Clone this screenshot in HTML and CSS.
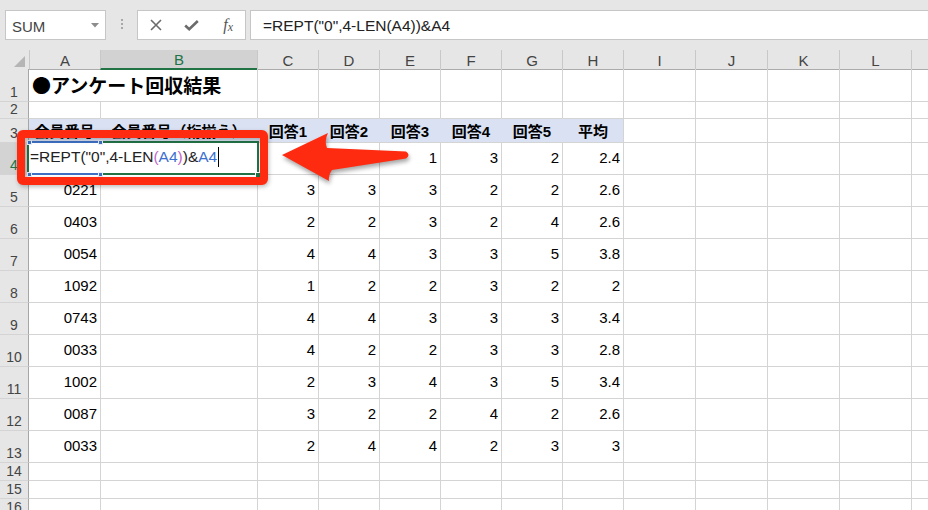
FILE: index.html
```html
<!DOCTYPE html>
<html lang="ja">
<head>
<meta charset="utf-8">
<title>アンケート回収結果</title>
<link rel="stylesheet" href="styles.css">
</head>
<body>
<div class="toolbar">
  <div class="namebox"><span>SUM</span><svg class="dd" width="8" height="5" viewBox="0 0 8 5"><polygon points="0,0 8,0 4,4.5" fill="#8c8c8c"/></svg></div>
  <div class="dots"><span class="dot"></span><span class="dot"></span><span class="dot"></span></div>
  <div class="btns">
    <span class="btn"><svg width="12" height="12" viewBox="0 0 12 12"><path d="M1 1 L11 11 M11 1 L1 11" stroke="#6b6b6b" stroke-width="1.6" fill="none"/></svg></span>
    <span class="btn"><svg width="15" height="11" viewBox="0 0 15 11"><path d="M1.2 5.5 L5.2 9.2 L13.8 1" stroke="#6b6b6b" stroke-width="2.6" fill="none"/></svg></span>
    <span class="btn fx"><i>f</i><i class="x">x</i></span>
  </div>
  <div class="fbar">=REPT("0",4-LEN(A4))&amp;A4</div>
</div>

<div class="sheet">
  <div class="row hdr">
    <div class="corner"><svg width="11" height="11" viewBox="0 0 11 11"><polygon points="11,0 11,11 0,11" fill="#b5b5b5"/></svg></div>
    <div class="ch">A</div><div class="ch selh">B</div><div class="ch">C</div><div class="ch">D</div><div class="ch">E</div><div class="ch">F</div><div class="ch">G</div><div class="ch">H</div><div class="ch">I</div><div class="ch">J</div><div class="ch">K</div><div class="ch">L</div><div class="ch"></div>
  </div>

  <div class="row r1">
    <div class="rh">1</div>
    <div class="c a span2 title">●アンケート回収結果</div>
    <div class="c"></div><div class="c"></div><div class="c"></div><div class="c"></div><div class="c"></div><div class="c"></div><div class="c"></div><div class="c"></div><div class="c"></div><div class="c"></div><div class="c"></div>
  </div>

  <div class="row r2">
    <div class="rh">2</div>
    <div class="c a"></div><div class="c"></div><div class="c"></div><div class="c"></div><div class="c"></div><div class="c"></div><div class="c"></div><div class="c"></div><div class="c"></div><div class="c"></div><div class="c"></div><div class="c"></div><div class="c"></div>
  </div>

  <div class="row r3">
    <div class="rh">3</div>
    <div class="c a th">会員番号</div><div class="c th">会員番号（桁揃え）</div><div class="c th">回答1</div><div class="c th">回答2</div><div class="c th">回答3</div><div class="c th">回答4</div><div class="c th">回答5</div><div class="c th">平均</div>
    <div class="c"></div><div class="c"></div><div class="c"></div><div class="c"></div><div class="c"></div>
  </div>

  <div class="row rd">
    <div class="rh selr">4</div>
    <div class="c a span2 edit">
      <span class="ftext">=REPT("0",4-LEN<span class="pk">(</span><span class="bl">A4</span><span class="pk">)</span>)&amp;<span class="bl">A4</span></span><span class="caret"></span>
      <span class="selbox"></span>
      <span class="handle"></span>
      <span class="refline top"></span><span class="refline bot"></span>
      <span class="sq s1"></span><span class="sq s2"></span><span class="sq s3"></span><span class="sq s4"></span>
    </div>
    <div class="c n">2</div><div class="c n">4</div><div class="c n">1</div><div class="c n">3</div><div class="c n">2</div><div class="c n">2.4</div>
    <div class="c"></div><div class="c"></div><div class="c"></div><div class="c"></div><div class="c"></div>
  </div>

  <div class="row rd">
    <div class="rh">5</div>
    <div class="c a n">0221</div><div class="c"></div><div class="c n">3</div><div class="c n">3</div><div class="c n">3</div><div class="c n">2</div><div class="c n">2</div><div class="c n">2.6</div>
    <div class="c"></div><div class="c"></div><div class="c"></div><div class="c"></div><div class="c"></div>
  </div>

  <div class="row rd">
    <div class="rh">6</div>
    <div class="c a n">0403</div><div class="c"></div><div class="c n">2</div><div class="c n">2</div><div class="c n">3</div><div class="c n">2</div><div class="c n">4</div><div class="c n">2.6</div>
    <div class="c"></div><div class="c"></div><div class="c"></div><div class="c"></div><div class="c"></div>
  </div>

  <div class="row rd">
    <div class="rh">7</div>
    <div class="c a n">0054</div><div class="c"></div><div class="c n">4</div><div class="c n">4</div><div class="c n">3</div><div class="c n">3</div><div class="c n">5</div><div class="c n">3.8</div>
    <div class="c"></div><div class="c"></div><div class="c"></div><div class="c"></div><div class="c"></div>
  </div>

  <div class="row rd">
    <div class="rh">8</div>
    <div class="c a n">1092</div><div class="c"></div><div class="c n">1</div><div class="c n">2</div><div class="c n">2</div><div class="c n">3</div><div class="c n">2</div><div class="c n">2</div>
    <div class="c"></div><div class="c"></div><div class="c"></div><div class="c"></div><div class="c"></div>
  </div>

  <div class="row rd">
    <div class="rh">9</div>
    <div class="c a n">0743</div><div class="c"></div><div class="c n">4</div><div class="c n">4</div><div class="c n">3</div><div class="c n">3</div><div class="c n">3</div><div class="c n">3.4</div>
    <div class="c"></div><div class="c"></div><div class="c"></div><div class="c"></div><div class="c"></div>
  </div>

  <div class="row rd">
    <div class="rh">10</div>
    <div class="c a n">0033</div><div class="c"></div><div class="c n">4</div><div class="c n">2</div><div class="c n">2</div><div class="c n">3</div><div class="c n">3</div><div class="c n">2.8</div>
    <div class="c"></div><div class="c"></div><div class="c"></div><div class="c"></div><div class="c"></div>
  </div>

  <div class="row rd">
    <div class="rh">11</div>
    <div class="c a n">1002</div><div class="c"></div><div class="c n">2</div><div class="c n">3</div><div class="c n">4</div><div class="c n">3</div><div class="c n">5</div><div class="c n">3.4</div>
    <div class="c"></div><div class="c"></div><div class="c"></div><div class="c"></div><div class="c"></div>
  </div>

  <div class="row rd">
    <div class="rh">12</div>
    <div class="c a n">0087</div><div class="c"></div><div class="c n">3</div><div class="c n">2</div><div class="c n">2</div><div class="c n">4</div><div class="c n">2</div><div class="c n">2.6</div>
    <div class="c"></div><div class="c"></div><div class="c"></div><div class="c"></div><div class="c"></div>
  </div>

  <div class="row rd">
    <div class="rh">13</div>
    <div class="c a n">0033</div><div class="c"></div><div class="c n">2</div><div class="c n">4</div><div class="c n">4</div><div class="c n">2</div><div class="c n">3</div><div class="c n">3</div>
    <div class="c"></div><div class="c"></div><div class="c"></div><div class="c"></div><div class="c"></div>
  </div>

  <div class="row rs">
    <div class="rh">14</div>
    <div class="c a"></div><div class="c"></div><div class="c"></div><div class="c"></div><div class="c"></div><div class="c"></div><div class="c"></div><div class="c"></div><div class="c"></div><div class="c"></div><div class="c"></div><div class="c"></div><div class="c"></div>
  </div>
  <div class="row rs">
    <div class="rh">15</div>
    <div class="c a"></div><div class="c"></div><div class="c"></div><div class="c"></div><div class="c"></div><div class="c"></div><div class="c"></div><div class="c"></div><div class="c"></div><div class="c"></div><div class="c"></div><div class="c"></div><div class="c"></div>
  </div>
  <div class="row rs">
    <div class="rh">16</div>
    <div class="c a"></div><div class="c"></div><div class="c"></div><div class="c"></div><div class="c"></div><div class="c"></div><div class="c"></div><div class="c"></div><div class="c"></div><div class="c"></div><div class="c"></div><div class="c"></div><div class="c"></div>
  </div>
</div>

<div class="redbox"></div>
<svg class="arrow" width="150" height="65" viewBox="270 125 150 65">
  <path d="M282 155 L328 133 Q324 141 327 148 L406 151.5 Q411 155 406 158.5 L332 170 Q328 175 329 181 Z" fill="#ff2b10"/>
</svg>
</body>
</html>
```

FILE: styles.css
```css
* { box-sizing: border-box; margin: 0; padding: 0; }
html, body { width: 928px; height: 510px; overflow: hidden; background: #fff; }
body {
  position: relative;
  font-family: "Liberation Sans", "Noto Sans CJK JP", sans-serif;
  color: #000;
}

/* ---------- toolbar ---------- */
.toolbar {
  height: 50px;
  background: #e6e6e6;
  display: flex;
  align-items: flex-start;
  padding: 10px 0 0 5px;
}
.namebox {
  width: 101px;
  height: 30px;
  background: #fff;
  border: 1px solid #c6c6c6;
  display: flex;
  align-items: center;
  justify-content: space-between;
  padding: 2px 6px 0 6px;
  font-size: 15px;
  color: #444;
}
.namebox .dd { margin-top: -2px; }
.dots {
  width: 31px;
  height: 30px;
  display: flex;
  flex-direction: column;
  align-items: center;
  gap: 2px;
  padding-top: 9px;
}
.dot { width: 2px; height: 2px; background: #a8a8a8; }
.btns {
  width: 109px;
  height: 30px;
  background: #fff;
  border: 1px solid #c6c6c6;
  display: flex;
  align-items: center;
}
.btn {
  width: 36px;
  height: 28px;
  display: flex;
  align-items: center;
  justify-content: center;
}
.fx {
  font-family: "Liberation Serif", serif;
  font-size: 16px;
  color: #555;
  padding-left: 2px;
}
.fx .x { font-size: 12px; margin-top: 5px; margin-left: 0; }
.fbar {
  flex: 1;
  height: 30px;
  margin-left: 4px;
  background: #fff;
  border: 1px solid #c6c6c6;
  border-right: none;
  padding: 1px 0 0 12px;
  display: flex;
  align-items: center;
  font-size: 15.5px;
  color: #222;
}

/* ---------- sheet ---------- */
.row {
  display: grid;
  grid-template-columns: 29px 71px 157px repeat(6, 61px) repeat(4, 72px) 1fr;
}
.hdr { height: 19px; background: #e6e6e6; }
.corner {
  display: flex;
  align-items: flex-end;
  justify-content: flex-end;
  padding: 0 4px 3px 0;
}
.ch {
  border-left: 1px solid #c8c8c8;
  border-bottom: 1px solid #ababab;
  display: flex;
  align-items: center;
  justify-content: center;
  font-size: 15px;
  color: #444;
  padding-top: 1px;
}
.ch.selh {
  background: #d2d2d2;
  color: #217346;
  border-bottom: 2px solid #217346;
}

.r1 { height: 32px; }
.r2 { height: 17px; }
.r3 { height: 24px; }
.rd { height: 32px; }
.rs { height: 18px; }

.rh {
  background: #e6e6e6;
  border-right: 1px solid #a6a6a6;
  display: flex;
  align-items: flex-end;
  justify-content: center;
  font-size: 14px;
  line-height: 15px;
  color: #444;
  padding-bottom: 1px;
}
.row:not(.r1) .rh { border-top: 1px solid #d4d4d4; }
.rh.selr { background: #d3d3d3; color: #217346; }

.c {
  border-left: 1px solid #d4d4d4;
  display: flex;
  align-items: center;
  font-size: 15px;
  white-space: nowrap;
}
.c.a { border-left: none; }
.row:not(.r1) .c { border-top: 1px solid #d4d4d4; }
.span2 { grid-column: span 2; }

.title {
  font-family: "Noto Sans CJK JP", sans-serif;
  font-weight: 700;
  font-size: 19px;
  padding: 0 0 1px 3px;
  color: #000;
}

.th {
  background: #d9e1f2;
  border-left-color: #d9e1f2 !important;
  justify-content: center;
  font-family: "Liberation Sans", "Noto Sans CJK JP", sans-serif;
  font-weight: 700;
  font-size: 15px;
}

.n { justify-content: flex-end; padding-right: 3px; padding-bottom: 2px; }

/* ---------- editing cell ---------- */
.edit {
  position: relative;
  background: #fff;
  padding: 0 0 3px 1px;
  font-size: 15.5px;
  color: #222;
}
.pk { color: #c266c8; }
.bl { color: #3d6fd0; }
.caret {
  display: inline-block;
  width: 1px;
  height: 20px;
  background: #000;
  margin-left: 1px;
}
.selbox {
  position: absolute;
  left: -2px;
  top: -2px;
  width: 232px;
  height: 34px;
  border: 2px solid #217346;
}
.handle {
  position: absolute;
  left: 226px;
  top: 29px;
  width: 6px;
  height: 6px;
  background: #217346;
  border: 1px solid #fff;
}
.refline {
  position: absolute;
  left: 0;
  width: 71px;
  height: 2px;
  background: #3d6fc4;
}
.refline.top { top: -2px; }
.refline.bot { top: 30px; }
.sq {
  position: absolute;
  width: 5px;
  height: 5px;
  background: #3d6fc4;
  border: 1px solid #e8eefa;
}
.s1 { left: -2px; top: -3px; }
.s2 { left: 69px; top: -3px; }
.s3 { left: -2px; top: 29px; }
.s4 { left: 69px; top: 29px; }

/* ---------- annotation overlays ---------- */
.redbox {
  position: absolute;
  left: 17px;
  top: 130px;
  width: 251px;
  height: 55px;
  border: 8px solid #ff2b10;
  border-radius: 6px;
  filter: drop-shadow(1px 2px 2px rgba(0,0,0,0.25));
}
.arrow {
  position: absolute;
  left: 270px;
  top: 125px;
  filter: drop-shadow(1px 3px 2px rgba(0,0,0,0.35));
}
```
